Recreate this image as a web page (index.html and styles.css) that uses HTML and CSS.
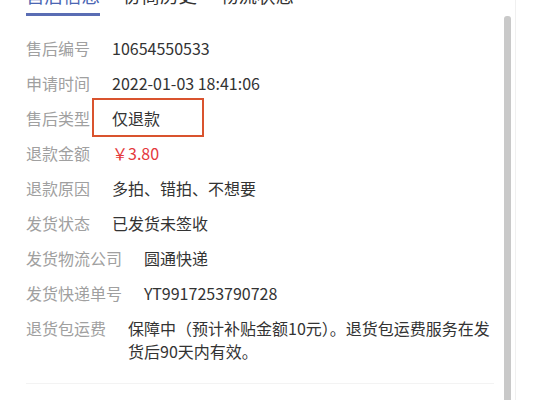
FILE: index.html
```html
<!DOCTYPE html>
<html lang="zh-CN">
<head>
<meta charset="utf-8">
<link rel="stylesheet" href="styles.css">
</head>
<body>
<div class="page">
  <div class="panel">
    <div class="tabs">
      <div class="tab active">售后信息</div>
      <div class="tab">协商历史</div>
      <div class="tab">物流状态</div>
    </div>
    <div class="rows">
      <div class="row"><span class="label">售后编号</span><span class="value">10654550533</span></div>
      <div class="row"><span class="label">申请时间</span><span class="value">2022-01-03 18:41:06</span></div>
      <div class="row"><span class="label">售后类型</span><span class="value">仅退款<span class="mark"></span></span></div>
      <div class="row"><span class="label">退款金额</span><span class="value red">￥3.80</span></div>
      <div class="row"><span class="label">退款原因</span><span class="value">多拍、错拍、不想要</span></div>
      <div class="row"><span class="label">发货状态</span><span class="value">已发货未签收</span></div>
      <div class="row"><span class="label">发货物流公司</span><span class="value">圆通快递</span></div>
      <div class="row"><span class="label">发货快递单号</span><span class="value">YT9917253790728</span></div>
      <div class="row"><span class="label">退货包运费</span><span class="value wrap">保障中（预计补贴金额10元）。退货包运费服务在发货后90天内有效。</span></div>
    </div>
    <div class="divider"></div>
  </div>
  <div class="scrollbar"></div>
  <div class="edge"></div>
</div>
</body>
</html>
```
FILE: styles.css
```css
* { box-sizing: border-box; }
html, body { margin: 0; padding: 0; background: #fff; }
body {
  width: 540px;
  height: 400px;
  overflow: hidden;
  font-family: "Noto Sans CJK SC", "Noto Sans", sans-serif;
}
.page {
  display: flex;
  height: 400px;
}
.panel {
  width: 504px;
  padding-left: 26px;
  padding-right: 10px;
}
.tabs {
  display: flex;
  gap: 23px;
  margin-top: -17px;
}
.tab {
  font-size: 18.5px;
  line-height: 24px;
  color: #333;
  padding-bottom: 6px;
  border-bottom: 3px solid transparent;
}
.tab.active {
  color: #4b66b3;
  border-bottom-color: #5a6db4;
}
.rows {
  padding-top: 15px;
}
.row {
  display: flex;
  padding: 6px 0;
  font-size: 16px;
  line-height: 23px;
}
.label {
  color: #a0a0a0;
  flex: none;
  margin-right: 22px;
}
.value {
  color: #333;
  position: relative;
}
.value.red { color: #e4393c; }
.value.wrap { width: 372px; }
.mark {
  position: absolute;
  left: -20px;
  top: -9px;
  width: 112px;
  height: 39px;
  border: 2px solid #d9532e;
}
.divider {
  margin-top: 14px;
  border-top: 1px solid #f3f3f3;
}
.scrollbar {
  width: 7px;
  margin-top: 16px;
  background: #c9c9c9;
  border-radius: 3px 3px 0 0;
}
.edge {
  margin-left: 4px;
  border-left: 1px solid #f0f0f0;
}
```
